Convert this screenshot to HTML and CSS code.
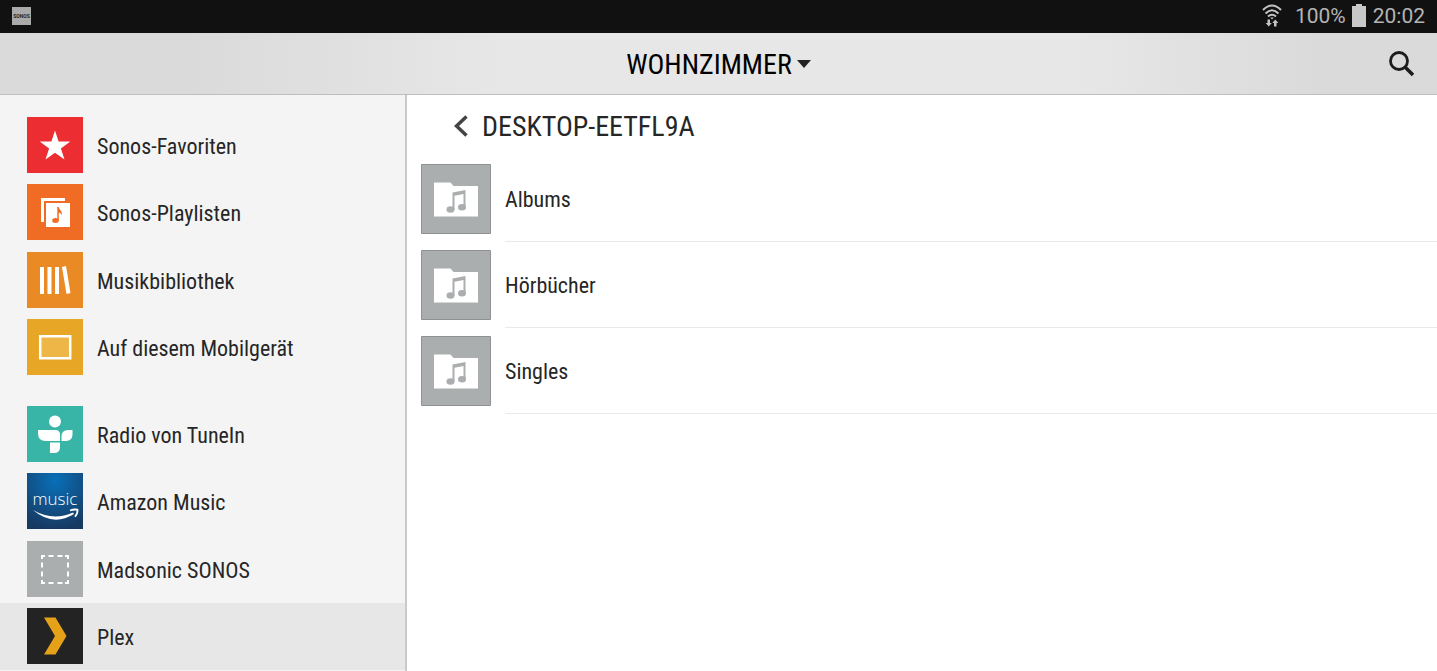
FILE: index.html
```html
<!DOCTYPE html>
<html lang="de">
<head>
    <meta charset="UTF-8">
    <meta name="viewport" content="width=device-width, initial-scale=1.0">
    <title>Sonos - Wohnzimmer</title>
    <link rel="stylesheet" href="styles.css">
</head>
<body>
    <div class="status-bar">
        <span class="app-badge">SONOS</span>
        <div class="status-info">
            <svg class="wifi" width="20" height="24" viewBox="0 0 20 24">
                <g fill="none" stroke="#c4c4c4" stroke-width="2">
                    <path d="M1 6Q10 -3 19 6"/>
                    <path d="M3.5 9.5Q10 3 16.5 9.5"/>
                    <path d="M6 12.5Q10 9 14 12.5"/>
                </g>
                <path fill="#c4c4c4" d="M8.2 13.5h3.6L10 15.5zM5.500 15.500h2.500v3.500h1.800L6.700 22.500 3.700 19h1.800zM12 22.500h2.500V19h1.800l-3-3.500-3 3.500H12z"/>
            </svg>
            <span>100%</span>
            <svg class="battery" width="14" height="23" viewBox="0 0 14 23">
                <path fill="#c8c8c8" d="M4 0h6v2h4v21H0V2h4z"/>
            </svg>
            <span>20:02</span>
        </div>
    </div>

    <header class="header">
        <button class="room-button" type="button">
            <span>WOHNZIMMER</span>
            <svg width="14" height="8" viewBox="0 0 14 8"><path fill="#222" d="M0 0h14L7 8z"/></svg>
        </button>
        <button class="search-button" type="button" aria-label="Suchen">
            <svg width="26" height="26" viewBox="0 0 26 26" fill="none" stroke="#1c1c1c">
                <circle cx="11" cy="10" r="8.500" stroke-width="2.800"/>
                <path d="M17 16l8 8" stroke-width="3.500"/>
            </svg>
        </button>
    </header>

    <div class="layout">
        <nav class="sidebar">
            <ul class="source-group">
                <li><a href="#" class="source">
                    <svg class="source-icon" viewBox="0 0 56 56">
                        <path fill="#ec2d32" d="M0 0h56v56H0z"/>
                        <path fill="#fff" d="M28 13.5l3.6 11h11.7l-9.4 6.9 3.6 11.2-9.5-6.9-9.5 6.9 3.6-11.2-9.4-6.9h11.7z"/>
                    </svg>
                    <span class="source-name">Sonos-Favoriten</span>
                </a></li>
                <li><a href="#" class="source">
                    <svg class="source-icon" viewBox="0 0 56 56">
                        <path fill="#f06c24" d="M0 0h56v56H0z"/>
                        <path fill="#fff" d="M14 14h24v3H17v21h-3zM19 19h24v24H19z"/>
                        <ellipse cx="28.5" cy="36.5" rx="3.3" ry="2.5" fill="#f06c24"/>
                        <path fill="#f06c24" d="M30.3 23h1.5c.4 2.800 3.800 4 3.200 8.500-.5-1.800-1.500-2.600-3.200-3v8h-1.500z"/>
                    </svg>
                    <span class="source-name">Sonos-Playlisten</span>
                </a></li>
                <li><a href="#" class="source">
                    <svg class="source-icon" viewBox="0 0 56 56">
                        <path fill="#ea8a24" d="M0 0h56v56H0z"/>
                        <path fill="#fff" d="M13 15h4v27h-4zM20.500 15h4v27h-4zM28 15h4v27h-4zM35 15l4-1 4.500 27-4 1z"/>
                    </svg>
                    <span class="source-name">Musikbibliothek</span>
                </a></li>
                <li><a href="#" class="source">
                    <svg class="source-icon" viewBox="0 0 56 56">
                        <path fill="#e7a626" d="M0 0h56v56H0z"/>
                        <path fill="#edb646" stroke="#fff" stroke-width="2.500" d="M13.200 17.200h30v22h-30z"/>
                    </svg>
                    <span class="source-name">Auf diesem Mobilgerät</span>
                </a></li>
            </ul>
            <ul class="source-group">
                <li><a href="#" class="source">
                    <svg class="source-icon" viewBox="0 0 56 56">
                        <path fill="#38b5a6" d="M0 0h56v56H0z"/>
                        <g fill="#fff">
                            <circle cx="28" cy="15.500" r="6"/>
                            <path d="M11 24h17.500q4.500 0 4.500 4.500V35H18.500Q11 35 11 27zM34.500 35v-4.500Q34.500 24 41 24h4.500v4.500Q45.500 35 39 35zM23 36.500h10v4.500q0 6-6 6h-4z"/>
                        </g>
                    </svg>
                    <span class="source-name">Radio von TuneIn</span>
                </a></li>
                <li><a href="#" class="source">
                    <svg class="source-icon" viewBox="0 0 56 56">
                        <defs>
                            <radialGradient id="amazon-bg" cx="50%" cy="15%" r="85%">
                                <stop offset="0" stop-color="#0870b8"/>
                                <stop offset="1" stop-color="#173a63"/>
                            </radialGradient>
                        </defs>
                        <path fill="url(#amazon-bg)" d="M0 0h56v56H0z"/>
                        <text class="music-text" x="28" y="32" text-anchor="middle">music</text>
                        <path fill="#fff" d="M6 37q20 11.500 40 2.500l1 1.500q-21 13-41-4z"/>
                        <path fill="none" stroke="#fff" stroke-width="1.800" d="M43 37.500q4-1.500 7.500-.800.500 3.300-2.500 7"/>
                    </svg>
                    <span class="source-name">Amazon Music</span>
                </a></li>
                <li><a href="#" class="source">
                    <svg class="source-icon" viewBox="0 0 56 56">
                        <path fill="#abaeaf" d="M0 0h56v56H0z"/>
                        <g fill="none" stroke="#fff" stroke-width="2">
                            <path d="M15 18v-3h3M38 15h3v3M41 39v3h-3M18 42h-3v-3"/>
                            <path stroke-dasharray="5 4" d="M21.500 15H36M21.500 42H36M15 21.500V37M41 21.500V37"/>
                        </g>
                    </svg>
                    <span class="source-name">Madsonic SONOS</span>
                </a></li>
                <li><a href="#" class="source active" aria-current="page">
                    <svg class="source-icon" viewBox="0 0 56 56">
                        <path fill="#232323" d="M0 0h56v56H0z"/>
                        <path fill="#e5a117" d="M17 9.500h11.500L39.500 28l-11 18.500H17L28 28z"/>
                    </svg>
                    <span class="source-name">Plex</span>
                </a></li>
            </ul>
        </nav>

        <main class="content">
            <div class="content-header">
                <button class="back-button" type="button" aria-label="Zurück">
                    <svg width="14" height="22" viewBox="0 0 14 22"><path fill="none" stroke="#444" stroke-width="3.500" d="M12.500 1.500L2.500 11l10 9.500"/></svg>
                </button>
                <h1>DESKTOP-EETFL9A</h1>
            </div>
            <svg class="symbols" width="0" height="0">
                <symbol id="music-folder" viewBox="0 0 70 70">
                    <path fill="#abaeaf" stroke="#8f9293" d="M.5.5h69v69H.5z"/>
                    <path fill="#fff" d="M13 18.500h16.500l3 3.500H57v30.500H13z"/>
                    <g fill="#abaeaf">
                        <path d="M31.500 28.500l13-2.500v17h-2V30l-9 1.700V46h-2z"/>
                        <ellipse cx="29.500" cy="45.500" rx="4" ry="3.200"/>
                        <ellipse cx="41" cy="43.200" rx="4" ry="3.200"/>
                    </g>
                </symbol>
            </svg>
            <ul class="folder-list">
                <li><a href="#" class="folder">
                    <svg class="folder-icon"><use href="#music-folder"/></svg>
                    <span class="folder-name">Albums</span>
                </a></li>
                <li><a href="#" class="folder">
                    <svg class="folder-icon"><use href="#music-folder"/></svg>
                    <span class="folder-name">Hörbücher</span>
                </a></li>
                <li><a href="#" class="folder">
                    <svg class="folder-icon"><use href="#music-folder"/></svg>
                    <span class="folder-name">Singles</span>
                </a></li>
            </ul>
        </main>
    </div>
</body>
</html>
```
FILE: styles.css
```css
* {
    box-sizing: border-box;
}

body {
    font-family: "Roboto Condensed", Roboto, sans-serif;
    font-size: 22px;
    color: #262626;
    margin: 0;
    min-height: 100vh;
    display: flex;
    flex-direction: column;
    background-color: #fff;
}

ul {
    list-style: none;
    margin: 0;
    padding: 0;
}

a {
    color: inherit;
    text-decoration: none;
}

button {
    background: none;
    border: none;
    padding: 0;
    color: inherit;
    cursor: pointer;
}

svg {
    display: block;
    flex: none;
}

/* Android status bar */
.status-bar {
    height: 33px;
    padding: 0 12px 2px;
    background-color: #111;
    color: #b4b4b4;
    display: flex;
    justify-content: space-between;
    align-items: center;
    font-family: Roboto, sans-serif;
}

.app-badge {
    width: 19px;
    height: 18px;
    background-color: #aaa;
    color: #222;
    font-size: 5px;
    font-weight: bold;
    line-height: 18px;
    text-align: center;
}

.status-info {
    display: flex;
    align-items: center;
    font-size: 21px;
    line-height: 32px;
}

.wifi {
    margin-right: 13px;
}

.battery {
    margin: 0 7px 0 6px;
}

.header {
    height: 62px;
    padding: 0 23px;
    border-bottom: 1px solid #bebebe;
    background: linear-gradient(to right, #dadada 13%, #e7e7e7 35%, #e7e7e7 75%, #dadada 92%);
    display: grid;
    grid-template-columns: 1fr auto 1fr;
    align-items: center;
}

.room-button {
    grid-column: 2;
    display: flex;
    align-items: center;
    gap: 5px;
    color: #000;
}

.room-button,
.content-header h1 {
    font-family: "Roboto Condensed", Roboto, sans-serif;
    font-size: 28px;
    font-weight: normal;
    line-height: 32px;
}

.room-button span,
.content-header h1 {
    padding-top: 2px;
}

.search-button {
    justify-self: end;
}

.layout {
    flex: 1;
    display: flex;
}

/* Music sources */
.sidebar {
    width: 407px;
    flex: none;
    padding-top: 16px;
    background-color: #f4f4f4;
    border-right: 2px solid #c9c9c9;
    display: flex;
    flex-direction: column;
    gap: 19px;
}

.source-group {
    height: 270px;
    display: grid;
    grid-template-rows: repeat(4, 1fr);
}

.source {
    height: 100%;
    padding-left: 27px;
    display: flex;
    align-items: center;
    gap: 14px;
}

.source.active {
    background-color: #e7e7e7;
}

.source-icon {
    width: 56px;
    height: 56px;
}

.source-name {
    padding-top: 3px;
}

.music-text {
    font-family: "Open Sans", sans-serif;
    font-size: 17px;
    font-weight: 300;
    fill: #fff;
}

/* Folder list */
.content {
    flex: 1;
}

.content-header {
    height: 61px;
    padding-left: 47px;
    display: flex;
    align-items: center;
    gap: 14px;
}

.content-header h1 {
    margin: 0;
}

.symbols {
    position: absolute;
}

.folder {
    height: 86px;
    padding-left: 14px;
    display: flex;
    align-items: center;
    gap: 14px;
}

.folder-icon {
    width: 70px;
    height: 70px;
}

.folder-name {
    flex: 1;
    align-self: stretch;
    padding-top: 2px;
    display: flex;
    align-items: center;
    border-bottom: 1px solid #e9e9e9;
}
```
